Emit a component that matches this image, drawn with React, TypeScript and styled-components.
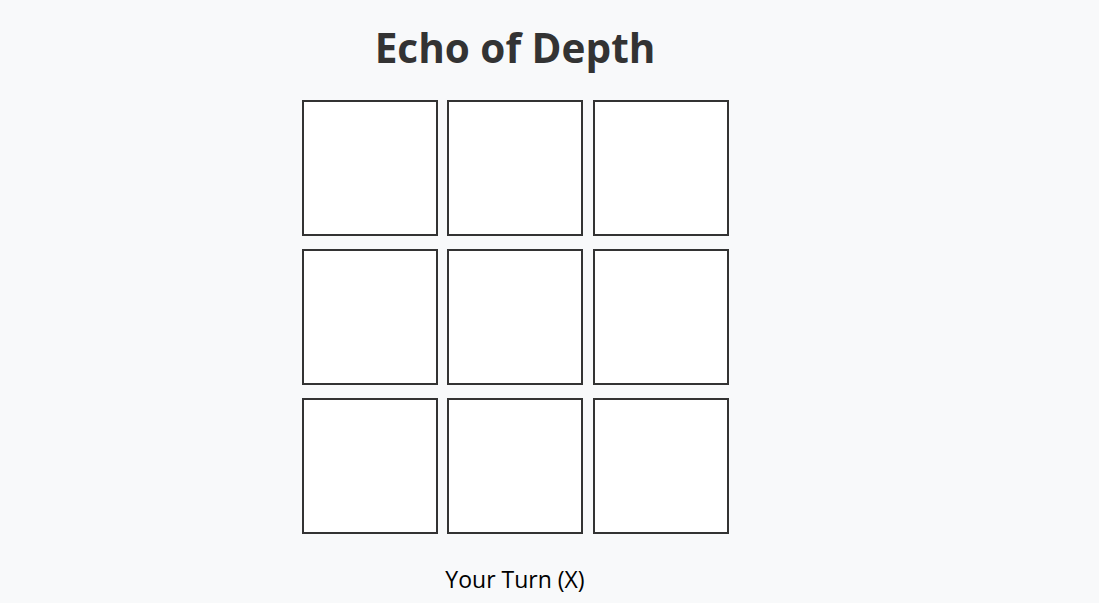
import React from "react";
import styled, { createGlobalStyle } from "styled-components";

const Global = createGlobalStyle`
  html, body { margin: 0; padding: 0; background: #f8f9fa; }
  body { font-family: "Open Sans", "Noto Sans", sans-serif; }
`;

const Page = styled.main`
  width: 1030px;
  display: flex;
  flex-direction: column;
  align-items: center;
  padding-top: 20px;
`;

const Title = styled.h1`
  margin: 0 0 24px;
  font-size: 40.5px;
  font-weight: 700;
  color: #333;
  line-height: 56px;
`;

const Board = styled.div`
  display: grid;
  grid-template-columns: repeat(3, 136px);
  grid-auto-rows: 136px;
  column-gap: 9.5px;
  row-gap: 13px;
`;

const Cell = styled.button`
  box-sizing: border-box;
  width: 136px;
  height: 136px;
  padding: 0;
  background: #fff;
  border: 2px solid #333;
  border-radius: 0;
  cursor: pointer;
`;

const Status = styled.p`
  margin: 30px 0 0;
  font-size: 23px;
  color: #000;
  line-height: 30px;
`;

export default function App() {
  return (
    <>
      <Global />
      <Page>
        <Title>Echo of Depth</Title>
        <Board>
          {Array.from({ length: 9 }, (_, i) => (
            <Cell key={i} aria-label={`cell ${i + 1}`} />
          ))}
        </Board>
        <Status>Your Turn (X)</Status>
      </Page>
    </>
  );
}
